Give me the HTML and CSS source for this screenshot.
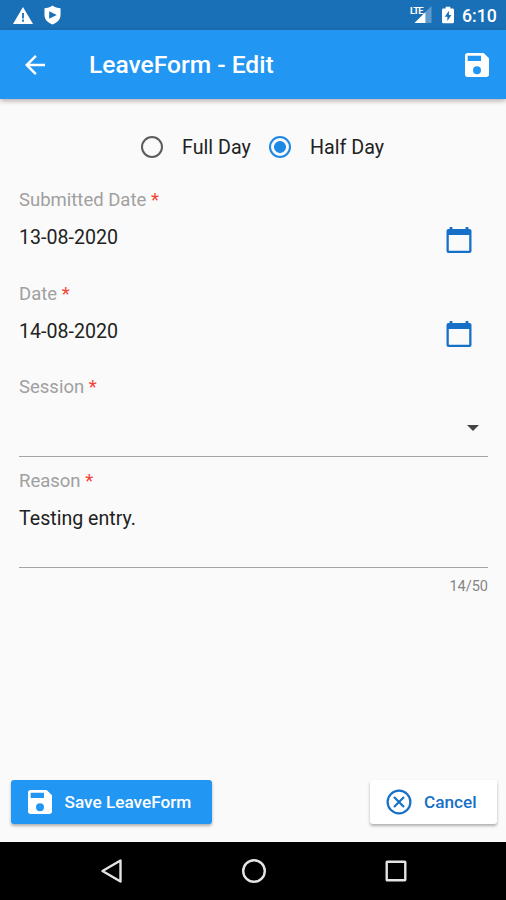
FILE: index.html
```html
<!DOCTYPE html>
<html lang="en">
<head>
<meta charset="utf-8">
<title>LeaveForm - Edit</title>
<link rel="stylesheet" href="styles.css">
</head>
<body>
<svg class="defs" width="0" height="0">
  <symbol id="save" viewBox="3 3 18 18"><path d="M17 3H5a2 2 0 0 0-2 2v14a2 2 0 0 0 2 2h14a2 2 0 0 0 2-2V7l-4-4zm-5 16a3 3 0 1 1 0-6 3 3 0 0 1 0 6zm3-10H5V5h10v4z"/></symbol>
  <symbol id="calendar" viewBox="0 0 26 28"><path d="M5 1v4M21 1v4" stroke="currentColor" stroke-width="2.8"/><path fill-rule="evenodd" d="M2.5 3h21A2 2 0 0 1 25.500 5v20a2 2 0 0 1-2 2h-21a2 2 0 0 1-2-2V5a2 2 0 0 1 2-2zM2.800 9v15.700h20.400V9z"/></symbol>
</svg>
<div class="screen">
  <header class="status">
    <svg class="warn" viewBox="0 0 20 17"><path fill="#fff" d="M10 0 20 17H0z"/><path d="M10 6v5.500M10 12.500v2.300" stroke="#1a70b7" stroke-width="1.800"/></svg>
    <svg class="shield" viewBox="0 0 18 20"><path fill="#fff" d="M9 0C6.500 2 3.500 2.600.5 2.800V10c0 5 4 8.500 8.500 10 4.500-1.500 8.500-5 8.500-10V2.800C14.500 2.600 11.500 2 9 0z"/><path fill="#1a70b7" d="m5.500 6 8 4-8 4z"/></svg>
    <span class="spacer"></span>
    <span class="signal"><span class="lte">LTE</span><svg viewBox="0 0 18 18"><path fill="#fff" opacity=".3" d="M18 0v18H0z"/><path fill="#fff" d="M11.500 6.500V18H0z"/></svg></span>
    <svg class="battery" viewBox="0 0 13 18"><path fill="#fff" d="M4 0h5v2h2.500A1.500 1.500 0 0 1 13 3.500v13a1.500 1.500 0 0 1-1.500 1.500h-10A1.500 1.500 0 0 1 0 16.500v-13A1.500 1.500 0 0 1 1.500 2H4z"/><path fill="#1a70b7" d="M7.500 4.500 3 10.800h2.800v4.700L10.200 9H7.500z"/></svg>
    <span class="clock">6:10</span>
  </header>
  <div class="appbar">
    <svg class="back" viewBox="4 4 16 16"><path fill="#fff" d="M20 11H7.830l5.590-5.590L12 4l-8 8 8 8 1.410-1.410L7.830 13H20z"/></svg>
    <h1>LeaveForm - Edit</h1>
    <svg class="save"><use href="#save"/></svg>
  </div>
  <main>
    <div class="radios">
      <span class="radio"></span><span class="full">Full Day</span>
      <span class="radio on"></span><span class="half">Half Day</span>
    </div>
    <div class="field"><label>Submitted Date <b>*</b></label>
      <div class="value"><span>13-08-2020</span><svg class="cal"><use href="#calendar"/></svg></div></div>
    <div class="field"><label>Date <b>*</b></label>
      <div class="value"><span>14-08-2020</span><svg class="cal"><use href="#calendar"/></svg></div></div>
    <div class="field session"><label>Session <b>*</b></label>
      <svg class="caret" viewBox="0 0 12 6"><path d="M0 0h12L6 6z"/></svg></div>
    <div class="field reason"><label>Reason <b>*</b></label>
      <div class="value"><span>Testing entry.</span></div></div>
    <div class="count">14/50</div>
  </main>
  <div class="actions">
    <div class="btn primary"><svg class="save"><use href="#save"/></svg><span>Save LeaveForm</span></div>
    <div class="btn plain"><svg class="cancel" viewBox="0 0 26 26"><g fill="none" stroke="currentColor" stroke-width="2.200"><circle cx="13" cy="13" r="11.400"/><path d="m8 8 10 10M18 8 8 18"/></g></svg><span>Cancel</span></div>
  </div>
  <nav>
    <svg viewBox="0 0 24 26"><path d="M20.500 2.500v21L2.500 13z"/></svg>
    <svg viewBox="0 0 24 26"><circle cx="12" cy="13" r="10.800"/></svg>
    <svg viewBox="0 0 24 26"><rect x="2.700" y="3.700" width="18.600" height="18.600" rx=".5"/></svg>
  </nav>
</div>
</body>
</html>
```

FILE: styles.css
```css
* { box-sizing: border-box; }
body { margin: 0; font-family: Roboto, "Liberation Sans", sans-serif; }
svg { display: block; flex: none; fill: currentColor; }
.defs { position: absolute; }
.screen { width: 506px; height: 900px; display: flex; flex-direction: column; background: #fafafa; overflow: hidden; white-space: nowrap; }

.status { height: 30px; flex: none; display: flex; align-items: center; padding: 0 9px 0 13px; background: #1a70b7; color: #fff; }
.warn { width: 20px; height: 17px; }
.shield { width: 17px; height: 20px; margin-left: 11px; }
.spacer { flex: 1; }
.signal { position: relative; width: 23px; height: 18px; display: flex; justify-content: flex-end; }
.signal svg { width: 18px; height: 17px; }
.lte { position: absolute; left: 1px; top: 0; font-size: 9.500px; line-height: 10px; font-weight: 700; letter-spacing: -0.900px; }
.battery { width: 12px; height: 18px; margin-left: 10px; }
.clock { width: 35px; margin-left: 8px; font-size: 17.700px; line-height: 30px; font-weight: 500; padding-top: 2px; }

.appbar { height: 69px; flex: none; display: flex; align-items: center; padding: 0 17px 0 25px; background: #2196f3; color: #fff; box-shadow: 0 2px 5px rgba(60, 30, 30, .35); }
.back { width: 20px; height: 20px; }
h1 { flex: 1; margin: 0 0 0 44px; font-size: 24.600px; line-height: 30px; font-weight: 500; padding-top: 1px; }
.save { width: 24px; height: 24px; }

main { flex: 1; padding: 24px 18px 0 19px; color: #222; }
.radios { height: 48px; display: flex; align-items: center; padding-left: 122px; font-size: 19.700px; }
.radio { width: 22px; height: 22px; border: 2px solid #5c5c5c; border-radius: 50%; flex: none; }
.radio.on { border-color: #1e88e5; background: radial-gradient(circle, #1e88e5 5.500px, transparent 6.300px); }
.full { width: 69px; margin: 0 18px 0 19px; }
.half { margin-left: 19px; }
.field { height: 93.700px; padding-top: 17px; }
label { display: block; height: 24px; font-size: 18.500px; line-height: 24px; color: #a0a0a0; }
label b { font-weight: 400; color: #f44336; }
.value { display: flex; justify-content: space-between; align-items: flex-start; font-size: 19.600px; line-height: 26px; padding-top: 13px; }
.cal { width: 26px; height: 28px; margin: 1px 16px 0 0; color: #1670c8; }
.session { display: flex; justify-content: space-between; height: 99px; border-bottom: 1px solid #a4a4a4; }
.caret { width: 12px; height: 6px; margin: 50px 9px 0 0; color: #444; }
.reason { height: 110.500px; padding-top: 11.500px; border-bottom: 1px solid #a4a4a4; }
.count { padding-top: 9px; font-size: 14.500px; line-height: 20px; color: #858585; text-align: right; }

.actions { height: 62px; flex: none; display: flex; justify-content: space-between; align-items: flex-start; padding: 0 9px 0 11px; }
.btn { height: 44px; display: flex; align-items: center; border-radius: 3px; font-size: 17.200px; font-weight: 500; box-shadow: 0 2px 3px rgba(0, 0, 0, .3); }
.primary { width: 201px; padding-left: 17px; background: #2196f3; color: #fff; }
.primary span { margin-left: 12.500px; }
.plain { width: 127px; padding-left: 16px; background: #fff; color: #1670c8; }
.cancel { width: 26px; height: 26px; }
.plain span { margin-left: 12px; }

nav { height: 58px; flex: none; display: flex; justify-content: space-between; align-items: center; padding: 0 98px 0 100px; background: #000; }
nav svg { width: 24px; height: 26px; fill: none; stroke: #e4e4e4; stroke-width: 2.400; stroke-linejoin: round; }
```
